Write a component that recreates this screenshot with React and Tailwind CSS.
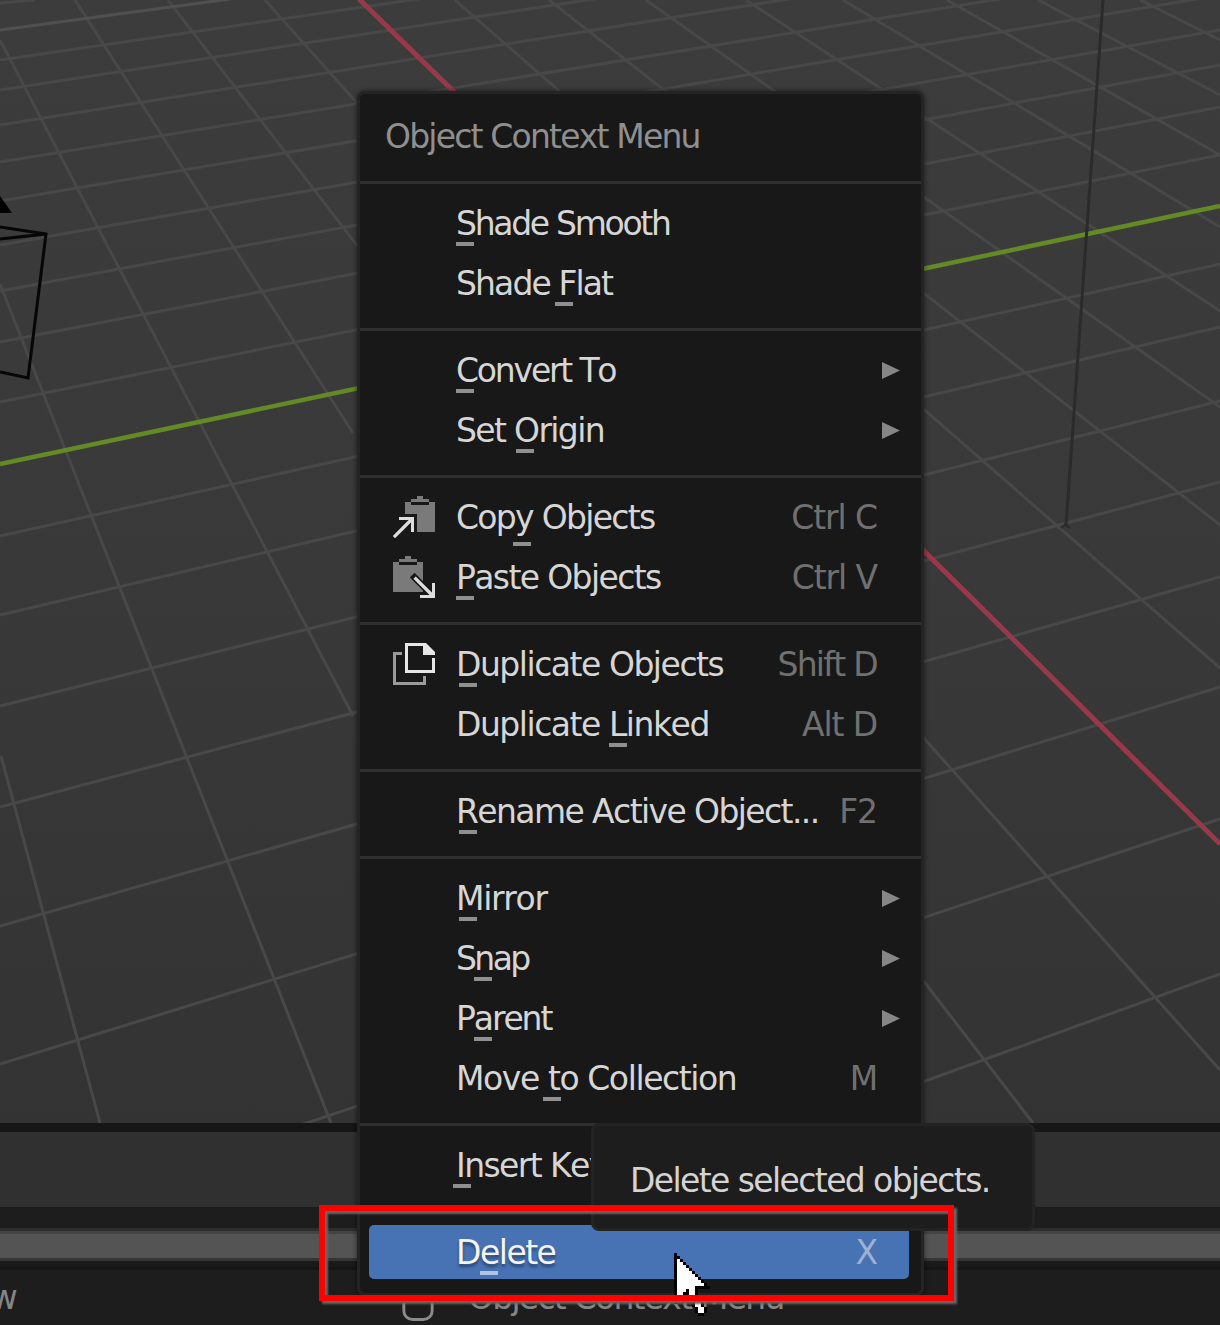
const GRID_LINES = [
  // along the green axis
  [0, 3, 35, 0], [0, 60, 1220, -118], [0, 90, 1220, -97],
  [0, 125, 1220, -70], [0, 162, 1220, -37], [0, 201, 1220, -5], [0, 245, 1220, 30],
  [0, 291, 1220, 65], [0, 342, 1220, 107], [0, 402, 1220, 155], [0, 536, 1220, 264],
  [0, 615, 1220, 327], [0, 706, 1220, 401], [0, 807, 1220, 482], [0, 926, 1220, 577],
  [0, 1064, 1220, 687], [0, 1225, 1220, 819], [355, 1288, 1220, 974],
  // along the red axis
  [1, 756, 100, 1123], [0, 284, 331, 1123], [0, 40, 353, 716], [75, 0, 353, 433],
  [168, 0, 1033, 1123], [265, 0, 1220, 1070], [455, 0, 1220, 668], [549, 0, 1220, 525],
  [646, 0, 1220, 407], [746, 0, 1220, 311], [843, 0, 1220, 227], [947, 0, 1220, 155],
  [1038, 0, 1220, 95], [1140, 0, 1220, 40],
];

const SECTIONS = [
  [
    { label: 'Shade Smooth', track: 'tracking-[-2.3px]', mark: 'left-0' },
    { label: 'Shade Flat', track: 'tracking-[-1.9px]', mark: 'left-[99px]' },
  ],
  [
    { label: 'Convert To', track: 'tracking-[-2.2px]', mark: 'left-0', submenu: true },
    { label: 'Set Origin', track: 'tracking-[-1.65px]', mark: 'left-[60px]', submenu: true },
  ],
  [
    { label: 'Copy Objects', track: 'tracking-[-1.7px]', mark: 'left-[57px]', low: true, icon: CopyIcon, keys: 'Ctrl C' },
    { label: 'Paste Objects', track: 'tracking-[-1.63px]', mark: 'left-0', icon: PasteIcon, keys: 'Ctrl V' },
  ],
  [
    { label: 'Duplicate Objects', track: 'tracking-[-1.48px]', mark: 'left-[3px]', icon: DuplicateIcon, keys: 'Shift D' },
    { label: 'Duplicate Linked', track: 'tracking-[-1.48px]', mark: 'left-[153px]', keys: 'Alt D' },
  ],
  [{ label: 'Rename Active Object...', track: 'tracking-[-1.6px]', mark: 'left-[3px]', keys: 'F2' }],
  [
    { label: 'Mirror', track: 'tracking-[-1.3px]', mark: 'left-[3px]', submenu: true },
    { label: 'Snap', track: 'tracking-[-2.6px]', mark: 'left-[18px]', submenu: true },
    { label: 'Parent', track: 'tracking-[-2.1px]', mark: 'left-[18px]', submenu: true },
    { label: 'Move to Collection', track: 'tracking-[-1.42px]', mark: 'left-[87px]', keys: 'M' },
  ],
  [{ label: 'Insert Keyframe...', track: 'tracking-[-1.6px]', mark: 'left-[-3px]' }],
  [{ label: 'Delete', track: 'tracking-[-1.5px]', mark: 'left-[24px]', keys: 'X', active: true }],
];

const CURSOR = [
  'X',
  'XX',
  'X.X',
  'X..X',
  'X...X',
  'X....X',
  'X.....X',
  'X......X',
  'X.......X',
  'X........X',
  'X.........X',
  'X......XXXXX',
  'X...X..X',
  'X..XX..X',
  'X.X  X..X',
  'XX   X..X',
  'X     X..X',
  '      X..X',
  '       X..X',
  '       X..X',
  '        XX',
];

function CopyIcon() {
  return (
    <svg viewBox="0 0 14 14" className="w-[42px] h-[42px]" shapeRendering="crispEdges">
      <path d="M8 0h2v1h2v1h2v10H8V6H4V2h2V1h2z" fill="#7a7a7a" />
      <path d="M6 2h6v1H6z" fill="#181818" />
      <path d="M2 7h5v5H6V8H2z" fill="#dedede" />
      <path d="M0.3 13.7L6.5 7.5" stroke="#dedede" strokeWidth="1.1" shapeRendering="auto" />
    </svg>
  );
}

function PasteIcon() {
  return (
    <svg viewBox="0 0 14 14" className="w-[42px] h-[42px]" shapeRendering="crispEdges">
      <path d="M4 0h2v1h2v1h2v10H0V2h2V1h2z" fill="#7a7a7a" />
      <path d="M2 2h6v1H2z" fill="#181818" />
      <path d="M6.4 6.4L13 13" stroke="#181818" strokeWidth="2.2" shapeRendering="auto" />
      <path d="M13 9h1v5H9v-1h4z" fill="#dedede" />
      <path d="M7.2 7.2L13.5 13.5" stroke="#dedede" strokeWidth="1.1" shapeRendering="auto" />
    </svg>
  );
}

function DuplicateIcon() {
  return (
    <svg viewBox="0 0 14 14" className="w-[42px] h-[42px]" fill="none">
      <path d="M3 3.5H0.5v10h10V11" stroke="#9a9a9a" />
      <path d="M10.5 0.5h-6v9h9V5" stroke="#e6e6e6" />
      <path d="M10 0h1l3 3v1h-4z" fill="#e6e6e6" />
    </svg>
  );
}

function MenuItem({ item }) {
  const Icon = item.icon;
  return (
    <div className="flex h-[60px] pl-[9px] pr-3 py-0.5">
      <div className={`flex items-center grow h-[54px] pt-0.5 pl-6 pr-[9px] rounded-[5px] ${item.active ? 'bg-[#4772b3]' : ''}`}>
        <div className="w-[63px] shrink-0 -mt-0.5">{Icon && <Icon />}</div>
        <div className={item.active ? 'relative text-[#f4f4f4] text-shadow-[0_3px_3px_#0006]' : 'relative text-[#d6d6d6]'}>
          <span className={item.track}>{item.label}</span>
          <span
            className={`absolute ${item.mark} ${item.low ? 'bottom-[-9px]' : 'bottom-[-3px]'} w-[18px] h-1 ${item.active ? 'bg-[#b3c4e0]' : 'bg-[#8f8f8f]'}`}
          />
        </div>
        {item.keys && (
          <span
            className={`ml-auto mr-[23px] ${item.keys.length > 6 ? 'tracking-[-1.7px]' : 'tracking-[-1.1px]'} ${item.active ? 'text-[#9fb1d0]' : 'text-[#707070]'}`}
          >
            {item.keys}
          </span>
        )}
        {item.submenu && (
          <svg viewBox="0 0 18 17" className="ml-auto w-[18px] h-[17px] -mt-0.5">
            <path d="M0 0L18 8.5L0 17z" fill="#868686" />
          </svg>
        )}
      </div>
    </div>
  );
}

function ContextMenu() {
  return (
    <div className="absolute left-[357px] top-[91px] w-[567px] h-[1205px] rounded-lg border-[3px] border-[#242424] bg-[#181818] shadow-[0_0_4px_1px_#0006]">
      <div className="flex items-center h-[87px] pl-[25px] pb-px text-[#8f8f8f] tracking-[-1.8px]">Object Context Menu</div>
      {SECTIONS.map((items, i) => (
        <div key={items[0].label}>
          <div className={i === 0 ? 'h-[3px] mb-2.5 bg-[#303030]' : 'h-[3px] mt-3.5 mb-2.5 bg-[#303030]'} />
          {items.map((item) => (
            <MenuItem key={item.label} item={item} />
          ))}
        </div>
      ))}
    </div>
  );
}

function Viewport() {
  return (
    <div className="h-[1123px] bg-linear-to-b from-[#3c3c3c] via-[#393939] to-[#333333]">
      <svg viewBox="0 0 1220 1123" className="w-full h-full" fill="none" strokeWidth="3">
        {GRID_LINES.map(([x1, y1, x2, y2], i) => (
          <line key={i} x1={x1} y1={y1} x2={x2} y2={y2} stroke="#484848" />
        ))}
        <path d="M0 30L230 -1" stroke="#505050" />
        <path d="M0 464L1220 206" stroke="#638a25" strokeWidth="4.5" />
        <path d="M359 -1L925 552L1220 844" stroke="#97394a" strokeWidth="5" />
        <path d="M1103 0L1066 526" stroke="#2b2b2b" />
        <path d="M1061 528l4 -3l5 3" stroke="#2b2b2b" strokeWidth="2" />
        {/* camera */}
        <path d="M0 196L12 213H0z" fill="#000" />
        <path d="M0 227L46 234L28 378L0 372M0 239L46 234" stroke="#060606" />
      </svg>
    </div>
  );
}

function Cursor() {
  return (
    <svg viewBox="0 0 12 21" className="absolute left-[674px] top-[1253px] w-9 h-[63px]" shapeRendering="crispEdges">
      {CURSOR.map((row, y) =>
        [...row].map((cell, x) =>
          cell === ' ' ? null : <rect key={`${x}-${y}`} x={x} y={y} width="1" height="1" fill={cell === 'X' ? '#000' : '#fff'} />
        )
      )}
    </svg>
  );
}

export default function App() {
  return (
    <div className="relative flex flex-col w-[1220px] h-[1325px] overflow-hidden bg-[#1d1d1d] font-['DejaVu_Sans',sans-serif] text-[33px] leading-[38px] whitespace-nowrap [font-kerning:none]">
      <Viewport />
      <div className="h-[9px] bg-[#161616]" />
      <div className="h-[75px] mb-[21px] bg-[#303030]" />
      <div className="h-[33px] border-t-[3px] border-b-[3px] border-t-[#2d2d2d] border-b-[#353535] bg-[#545454]">
        <div className="h-[3px] bg-[#444444]" />
      </div>
      <div className="h-[9px] border-b-[3px] border-[#151515] bg-[#1a1a1a]" />
      <div className="flex items-start h-[55px] pt-[9px] text-[#858585] tracking-[-1.75px]">
        <div className="flex justify-end w-4 mr-[386px]">w</div>
        <svg viewBox="0 0 32 44" className="w-8 h-[43px]" fill="none" stroke="#8a8a8a" strokeWidth="3">
          <rect x="1.5" y="1.5" width="29" height="40" rx="9" />
        </svg>
        <span className="ml-[34px]">Object Context Menu</span>
      </div>

      <ContextMenu />
      <div className="absolute left-[591px] top-[1123px] flex items-center w-[444px] h-[108px] pl-9 pt-2 rounded-lg border-[3px] border-[#232323] bg-[#1d1d1d] text-[#d4d4d4] tracking-[-1.6px]">
        Delete selected objects.
      </div>
      <Cursor />
      <div className="absolute left-[319px] top-[1205px] w-[635px] h-24 border-[6px] border-[#ff0000] shadow-[3px_3px_2px_#666,inset_3px_3px_2px_#666]" />
    </div>
  );
}
